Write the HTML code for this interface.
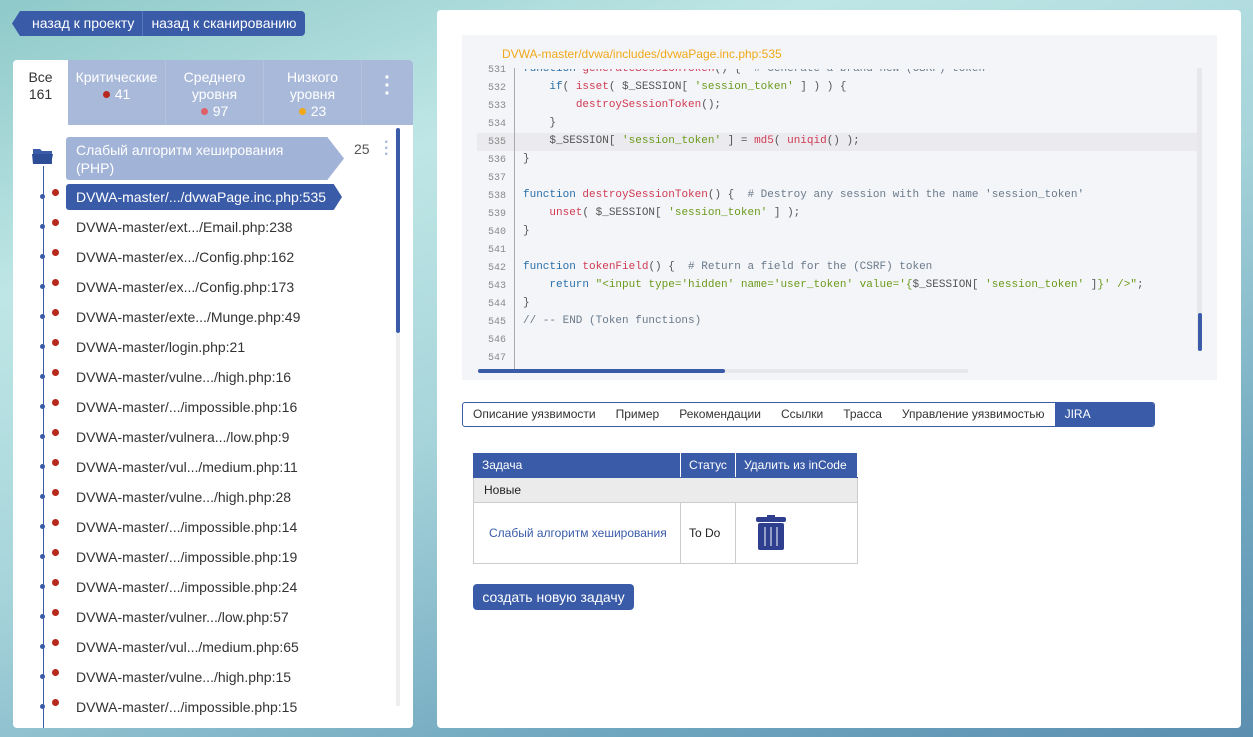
<!DOCTYPE html>
<html><head><meta charset="utf-8"><style>
*{box-sizing:border-box;margin:0;padding:0}
body{width:1253px;height:737px;overflow:hidden;font-family:"Liberation Sans",sans-serif;background:linear-gradient(160deg,#8fc9c9 0%,#bfe6e6 25%,#a6d4da 50%,#6fa6bf 80%,#5c8fb0 100%);position:relative}
.abs{position:absolute}
.back{left:12px;top:11px;height:25px;display:flex;font-size:14px;color:#fff}
.back div{background:#3a5ba8;padding:4px 8px;line-height:17px}
.back .a{clip-path:polygon(8px 0,100% 0,100% 100%,8px 100%,0 50%);padding-left:20px;border-right:1px solid #5775bb}
.back .b{border-radius:0 4px 4px 0}
.left{left:13px;top:60px;width:400px;height:668px;background:#fff;border-radius:4px;overflow:hidden}
.tabs{height:65px;display:flex;background:#a9b9da;font-size:14px;color:#fff;text-align:center}
.tabs div{line-height:17px;padding-top:9px;border-right:1px solid #b4c2e0}
.dot{display:inline-block;width:7px;height:7px;border-radius:50%;margin-right:5px;vertical-align:1px}
.item{position:absolute;left:63px;font-size:14px;color:#333;line-height:20px}
.rd{position:absolute;left:39px;width:7px;height:7px;border-radius:50%;background:#b7281d}
.sm{position:absolute;left:27px;width:5px;height:5px;border-radius:50%;background:#3a5ba8}
.right{left:437px;top:10px;width:804px;height:718px;background:#fff;border-radius:4px}
.code{left:462px;top:35px;width:755px;height:345px;background:#f4f5f9;font-family:"Liberation Mono",monospace;font-size:11px}
.ln{position:absolute;left:0;width:44px;text-align:right;color:#8a8a8a}
.cl{position:absolute;left:61px;white-space:pre;color:#555}
.k{color:#2a6fa8}.f{color:#d03a52}.s{color:#6a9a1a}.c{color:#6a7a8a}
.jt{left:462px;top:402px;width:693px;height:25px;border:1px solid #3a5ba8;border-radius:3px;display:flex;font-size:12px;color:#333;overflow:hidden}
.jt div{padding:0 10px;line-height:23px}
table{position:absolute;left:473px;top:452px;border-collapse:collapse;font-size:12px}
td,th{border:1px solid #ccc;font-weight:normal;text-align:left}
th{background:#3a5ba8;color:#fff;height:25px;padding:0 8px;border-color:#fff #fff #3a5ba8 #3a5ba8}
</style></head><body>
<div class="abs back"><div class="a">назад к проекту</div><div class="b">назад к сканированию</div></div>

<div class="abs left">
 <div class="tabs">
  <div style="width:55px;background:#fff;color:#333;border:none">Все<br>161</div>
  <div style="width:98px">Критические<br><span class="dot" style="background:#b7281d"></span>41</div>
  <div style="width:98px">Среднего<br>уровня<br><span class="dot" style="background:#e0606a"></span>97</div>
  <div style="width:98px">Низкого<br>уровня<br><span class="dot" style="background:#f0a818"></span>23</div>
  <div style="width:51px;font-size:20px;font-weight:bold;line-height:8px;padding-top:14px;border:none">·<br>·<br>·</div>
 </div>
 <svg class="abs" style="left:19px;top:86px" width="22" height="20"><path d="M1 3h7l2 2h10v13H1z" fill="#3a5ba8"/><path d="M0 8h21l-2 10H1z" fill="#2d4d96"/></svg>
 <div class="abs" style="left:30px;top:106px;width:1px;height:562px;background:#3a5ba8"></div>
 <div class="abs" style="left:53px;top:77px;width:278px;height:43px;background:#a2b3d8;clip-path:polygon(0 0,94% 0,100% 50%,94% 100%,0 100%);border-radius:3px;color:#fff;font-size:14px;line-height:18px;padding:4px 10px">Слабый алгоритм хеширования<br>(PHP)</div>
 <div class="abs" style="left:341px;top:81px;font-size:14px;color:#555">25</div>
 <div class="abs" style="left:371px;top:80px;color:#a9b9da;font-size:16px;font-weight:bold;line-height:6px">·<br>·<br>·</div>
 <div class="abs" style="left:383px;top:68px;width:4px;height:205px;background:#3a5ba8;border-radius:2px"></div>
 <div class="abs" style="left:383px;top:273px;width:4px;height:373px;background:#eee"></div>
 <div class="abs" style="left:53px;top:124px;width:276px;height:26px;background:#3a5ba8;clip-path:polygon(0 0,97% 0,100% 50%,97% 100%,0 100%);border-radius:3px"></div>
 <div id="list"></div>
</div>

<div class="abs right"></div>
<div class="abs code">
 <div class="abs" style="left:40px;top:12px;font-family:'Liberation Sans',sans-serif;font-size:12px;color:#f0a818">DVWA-master/dvwa/includes/dvwaPage.inc.php:535</div>
 <div class="abs" style="left:15px;top:98px;width:725px;height:18px;background:#ebebef"></div>
 <div class="abs" style="left:52px;top:33px;width:1px;height:305px;background:#aaa"></div>
 <div class="abs" style="left:735px;top:33px;width:5px;height:283px;background:#e8e8ec"></div>
 <div class="abs" style="left:736px;top:278px;width:4px;height:38px;background:#3a5ba8;border-radius:2px"></div>
 <div class="abs" style="left:16px;top:334px;width:490px;height:4px;background:#e8e8ec"></div>
 <div class="abs" style="left:16px;top:334px;width:247px;height:4px;background:#3a5ba8;border-radius:2px"></div>
 <div id="code"></div>
</div>

<div class="abs jt"><div>Описание уязвимости</div><div>Пример</div><div>Рекомендации</div><div>Ссылки</div><div>Трасса</div><div>Управление уязвимостью</div><div style="background:#3a5ba8;color:#fff;flex:1">JIRA</div></div>

<table>
<tr><th style="width:207px">Задача</th><th style="width:42px">Статус</th><th style="width:122px">Удалить из inCode</th></tr>
<tr><td colspan="3" style="background:#ebebeb;height:25px;padding:0 10px;color:#222">Новые</td></tr>
<tr><td style="height:61px;padding-left:15px;color:#3a5ba8">Слабый алгоритм хеширования</td><td style="padding-left:8px;color:#222">To Do</td><td><svg style="margin-left:20px;display:block" width="30" height="36"><rect x="11" y="0" width="8" height="3" fill="#2d3f8e"/><rect x="0" y="2" width="30" height="5" rx="2" fill="#2d3f8e"/><rect x="2" y="8" width="26" height="27" rx="2" fill="#2d3f8e"/><path d="M9 12v19M15 12v19M21 12v19" stroke="#fff" stroke-width="1"/></svg></td></tr>
</table>
<div class="abs" style="left:473px;top:584px;width:161px;height:26px;background:#3a5ba8;border-radius:4px;color:#fff;font-size:14px;line-height:26px;text-align:center">создать новую задачу</div>

<script>
var items=["DVWA-master/.../dvwaPage.inc.php:535","DVWA-master/ext.../Email.php:238","DVWA-master/ex.../Config.php:162","DVWA-master/ex.../Config.php:173","DVWA-master/exte.../Munge.php:49","DVWA-master/login.php:21","DVWA-master/vulne.../high.php:16","DVWA-master/.../impossible.php:16","DVWA-master/vulnera.../low.php:9","DVWA-master/vul.../medium.php:11","DVWA-master/vulne.../high.php:28","DVWA-master/.../impossible.php:14","DVWA-master/.../impossible.php:19","DVWA-master/.../impossible.php:24","DVWA-master/vulner.../low.php:57","DVWA-master/vul.../medium.php:65","DVWA-master/vulne.../high.php:15","DVWA-master/.../impossible.php:15"];
var h="";items.forEach(function(t,i){var y=126+i*30;h+='<div class="sm" style="top:'+(y+8)+'px"></div><div class="rd" style="top:'+(y+3)+'px"></div><div class="item" style="top:'+(y+1)+'px;'+(i==0?'color:#fff':'')+'">'+t+'</div>'});
document.getElementById("list").innerHTML=h;
var c=[
'<span class="k">function</span> <span class="f">generateSessionToken</span>() {  <span class="c"># Generate a brand new (CSRF) token</span>',
'    <span class="k">if</span>( <span class="f">isset</span>( $_SESSION[ <span class="s">\'session_token\'</span> ] ) ) {',
'        <span class="f">destroySessionToken</span>();',
'    }',
'    $_SESSION[ <span class="s">\'session_token\'</span> ] = <span class="f">md5</span>( <span class="f">uniqid</span>() );',
'}','',
'<span class="k">function</span> <span class="f">destroySessionToken</span>() {  <span class="c"># Destroy any session with the name \'session_token\'</span>',
'    <span class="f">unset</span>( $_SESSION[ <span class="s">\'session_token\'</span> ] );',
'}','',
'<span class="k">function</span> <span class="f">tokenField</span>() {  <span class="c"># Return a field for the (CSRF) token</span>',
'    <span class="k">return</span> <span class="s">"&lt;input type=\'hidden\' name=\'user_token\' value=\'{</span>$_SESSION[ <span class="s">\'session_token\'</span> ]<span class="s">}\' /&gt;"</span>;',
'}','<span class="c">// -- END (Token functions)</span>','',''];
var s="";c.forEach(function(l,i){var y=28+i*18;s+='<div class="ln" style="top:'+(y+2)+'px;font-size:10px">'+(531+i)+'</div><div class="cl" style="top:'+y+'px;'+(i==0?'clip-path:inset(6px 0 0 0)':'')+'">'+l+'</div>'});
document.getElementById("code").innerHTML=s;
</script>
</body></html>
